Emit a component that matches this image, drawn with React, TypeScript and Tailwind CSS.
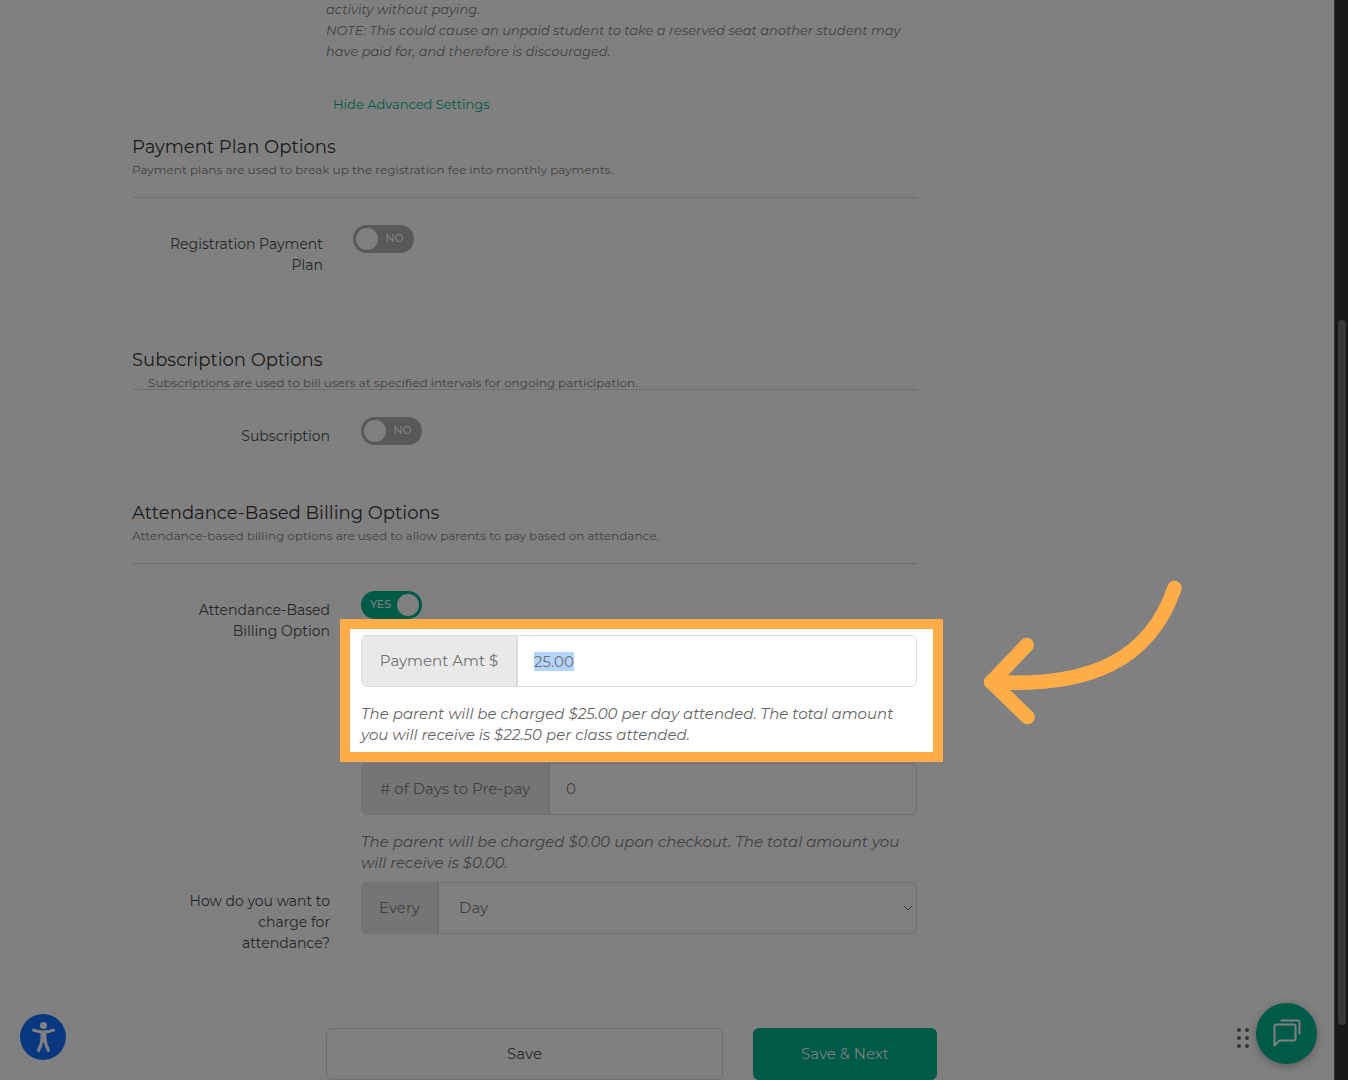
import { useEffect, useRef, useState } from "react";
import type { ReactNode } from "react";

interface ToggleProps {
  id: string;
  defaultOn?: boolean;
}

function Toggle({ id, defaultOn = false }: ToggleProps) {
  const [on, setOn] = useState(defaultOn);

  return (
    <span
      className={`relative flex h-7 w-[61px] items-center rounded-full px-[3px] ${
        on ? "flex-row-reverse bg-[#005a48]" : "bg-[#595959]"
      }`}
    >
      <input
        id={id}
        type="checkbox"
        checked={on}
        onChange={() => setOn(!on)}
        className="absolute inset-0 z-10 cursor-pointer appearance-none rounded-full"
      />
      <span className="size-[22px] shrink-0 rounded-full bg-[#808080]" />
      <span className="flex-1 pb-0.5 text-center text-[11px] font-medium text-[#808080]">
        {on ? "YES" : "NO"}
      </span>
    </span>
  );
}

interface SectionHeaderProps {
  title: string;
  children: ReactNode;
  tight?: boolean;
}

function SectionHeader({ title, children, tight }: SectionHeaderProps) {
  return (
    <header
      className={`border-b border-[#6f6f6f] ${tight ? "h-[42px]" : "h-[63px]"}`}
    >
      <h2 className="text-lg leading-[25px] text-[#1a1a1a]">{title}</h2>
      <p
        className={`text-xs leading-5 text-[#404040] ${tight ? "pl-4" : ""}`}
      >
        {children}
      </p>
    </header>
  );
}

const rowClass = "grid grid-cols-[198px_1fr] gap-x-[31px]";
const labelClass = "text-right text-sm leading-[21px] text-[#262626]";
const helpClass = "text-[15px] leading-[21px] italic";

export default function App() {
  const amountRef = useRef<HTMLInputElement>(null);
  const [amount, setAmount] = useState("25.00");
  const [days, setDays] = useState("0");

  useEffect(() => {
    amountRef.current?.focus({ preventScroll: true });
    amountRef.current?.select();
  }, []);

  return (
    <div className="relative flex min-h-screen overflow-hidden bg-[#808080] font-['Montserrat','Inter',sans-serif] text-[#404040]">
      <main className="flex-1 pl-[132px]">
        <div className="max-w-[805px]">
          <p className="-mt-px pl-[194px] text-[13px] leading-[21px] italic">
            activity without paying.
            <br />
            NOTE: This could cause an unpaid student to take a reserved seat another student may
            <br />
            have paid for, and therefore is discouraged.
          </p>
          <a
            href="#advanced"
            className="mt-8 ml-[201px] inline-block text-[13px] leading-5 text-[#005a48]"
          >
            Hide Advanced Settings
          </a>

          <form className="mr-5" onSubmit={(e) => e.preventDefault()}>
            <section className="mt-[19px] min-h-[213px]">
              <SectionHeader title="Payment Plan Options">
                Payment plans are used to break up the registration fee into monthly payments.
              </SectionHeader>
              <div className="grid grid-cols-[191px_1fr] gap-x-[30px] pt-[27px]">
                <label htmlFor="payment-plan" className={`pt-[9px] ${labelClass}`}>
                  Registration Payment
                  <br />
                  Plan
                </label>
                <Toggle id="payment-plan" />
              </div>
            </section>

            <section className="min-h-[153px]">
              <SectionHeader title="Subscription Options" tight>
                Subscriptions are used to bill users at specified intervals for ongoing participation.
              </SectionHeader>
              <div className={`pt-[27px] ${rowClass}`}>
                <label htmlFor="subscription" className={`pt-[9px] ${labelClass}`}>
                  Subscription
                </label>
                <Toggle id="subscription" />
              </div>
            </section>

            <section>
              <SectionHeader title="Attendance-Based Billing Options">
                Attendance-based billing options are used to allow parents to pay based on attendance.
              </SectionHeader>
              <div className={`pt-[27px] ${rowClass}`}>
                <label htmlFor="attendance" className={`pt-[9px] ${labelClass}`}>
                  Attendance-Based
                  <br />
                  Billing Option
                </label>
                <div>
                  <Toggle id="attendance" defaultOn />
                  <div className="-mr-[26px] -ml-[21px] border-[10px] border-[#ffad49] bg-white pt-1.5 pr-4 pb-[7px] pl-[11px]">
                    <div className="flex h-[52px] overflow-hidden rounded-md border border-[#dcdcdc]">
                      <label
                        htmlFor="amount"
                        className="flex w-[156px] shrink-0 items-center justify-center border-r-2 border-[#dcdcdc] bg-[#e9e9e9] text-[15px] text-[#707070]"
                      >
                        Payment Amt $
                      </label>
                      <input
                        ref={amountRef}
                        id="amount"
                        value={amount}
                        onChange={(e) => setAmount(e.target.value)}
                        className="min-w-0 flex-1 px-4 text-[15px] leading-[19px] text-[#707070] outline-none selection:bg-[#b3d4fc] selection:text-[#707070]"
                      />
                    </div>
                    <p className={`mt-4 text-[#666666] ${helpClass}`}>
                      The parent will be charged $25.00 per day attended. The total amount
                      <br />
                      you will receive is $22.50 per class attended.
                    </p>
                  </div>
                  <div className="mt-px flex h-[52px] overflow-hidden rounded-md border border-[#6f6f6f]">
                    <label
                      htmlFor="days"
                      className="flex w-[188px] shrink-0 items-center justify-center border-r-2 border-[#6f6f6f] bg-[#757575] text-[15px]"
                    >
                      # of Days to Pre-pay
                    </label>
                    <input
                      id="days"
                      value={days}
                      onChange={(e) => setDays(e.target.value)}
                      className="min-w-0 flex-1 px-4 text-[15px] outline-none"
                    />
                  </div>
                  <p className={`mt-4 ${helpClass}`}>
                    The parent will be charged $0.00 upon checkout. The total amount you
                    <br />
                    will receive is $0.00.
                  </p>
                </div>
              </div>

              <div className={`pt-[9px] ${rowClass}`}>
                <label htmlFor="frequency" className={`pt-[9px] ${labelClass}`}>
                  How do you want to
                  <br />
                  charge for
                  <br />
                  attendance?
                </label>
                <div className="flex h-[52px] overflow-hidden rounded-md border border-[#6f6f6f]">
                  <span className="flex w-[77px] shrink-0 items-center justify-center border-r-2 border-[#6f6f6f] bg-[#757575] text-[15px]">
                    Every
                  </span>
                  <div className="relative flex-1">
                    <select
                      id="frequency"
                      className="size-full appearance-none pr-6 pl-5 text-[15px] outline-none"
                    >
                      <option>Day</option>
                      <option>Week</option>
                      <option>Month</option>
                    </select>
                    <svg
                      viewBox="0 0 10 6"
                      className="pointer-events-none absolute top-1/2 right-[3px] h-1.5 w-2.5 -translate-y-1/2"
                      fill="none"
                      stroke="#333333"
                    >
                      <path d="M1 1l4 4 4-4" />
                    </svg>
                  </div>
                </div>
              </div>
            </section>
          </form>

          <div className="mt-[74px] ml-[194px] flex gap-[30px]">
            <button
              type="button"
              className="h-[52px] flex-1 rounded-md border border-[#6f6f6f] text-[15px] text-[#262626]"
            >
              Save
            </button>
            <button
              type="button"
              className="h-[52px] w-[184px] rounded-md bg-[#005a48] text-[15px] text-[#808080]"
            >
              Save &amp; Next
            </button>
          </div>
        </div>
      </main>

      {/* scrollbar track */}
      <div className="w-3.5 shrink-0 border-l border-[#333333] bg-[#181818] pt-80 pl-[3px]">
        <div className="h-[705px] w-2 rounded-full bg-[#383838]" />
      </div>

      <svg
        viewBox="0 0 240 180"
        className="pointer-events-none absolute top-[560px] left-[960px] h-[180px] w-60"
        fill="none"
        stroke="#ffad49"
        strokeWidth="14.5"
        strokeLinecap="round"
        strokeLinejoin="round"
      >
        <path d="M214.5 28C190 100 130 128 31 122" />
        <path d="M66.7 85L31.5 122L67.5 157" />
      </svg>

      <button
        type="button"
        aria-label="Accessibility"
        className="absolute bottom-5 left-5 size-[46px] rounded-full bg-[#0a3880]"
      >
        <svg viewBox="0 0 46 46" className="size-full" fill="none" stroke="#808080">
          <circle cx="23.5" cy="11.5" r="3.5" fill="#808080" stroke="none" />
          <path
            d="M13.5 16.2Q23.5 19.8 33.5 16.2"
            strokeWidth="3"
            strokeLinecap="round"
          />
          <path d="M20.5 17.5h6v8l-3 4-3-4z" fill="#808080" stroke="none" />
          <path
            d="M22 25.5Q21.5 31 18.5 36.5M25 25.5Q25.5 31 28.5 36.5"
            strokeWidth="3"
            strokeLinecap="round"
          />
        </svg>
      </button>

      <div className="absolute right-[31px] bottom-4 flex items-center gap-1.5">
        <svg viewBox="0 0 14 22" className="mt-2 h-[22px] w-3.5" fill="#333333">
          <circle cx="3" cy="3" r="2" />
          <circle cx="11" cy="3" r="2" />
          <circle cx="3" cy="11" r="2" />
          <circle cx="11" cy="11" r="2" />
          <circle cx="3" cy="19" r="2" />
          <circle cx="11" cy="19" r="2" />
        </svg>
        <button
          type="button"
          aria-label="Open chat"
          className="size-[61px] rounded-full bg-[#005a48] shadow-[0_2px_8px_rgba(0,0,0,0.3)]"
        >
          <svg
            viewBox="0 0 61 61"
            className="size-full"
            fill="none"
            stroke="#808080"
            strokeWidth="2"
            strokeLinejoin="round"
          >
            <path d="M24.5 17.5H41.5Q43.5 17.5 43.5 19.5V31.5" />
            <path d="M18.5 42.5V23.5Q18.5 21.5 20.5 21.5H37.5Q39.5 21.5 39.5 23.5V35.5Q39.5 37.5 37.5 37.5H23.5Z" />
          </svg>
        </button>
      </div>
    </div>
  );
}
